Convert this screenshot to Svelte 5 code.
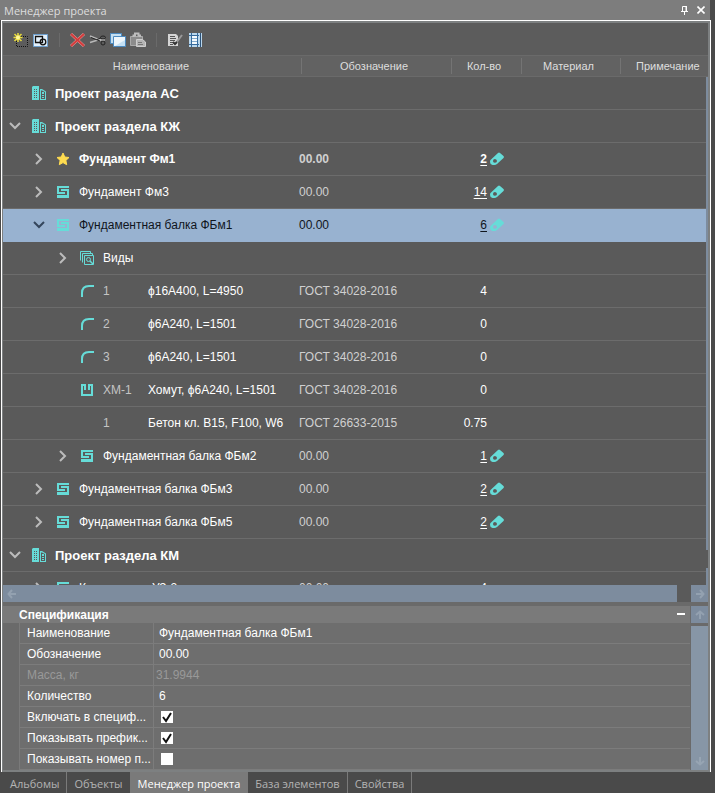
<script>
  const columns = ['Наименование', 'Обозначение', 'Кол-во', 'Материал', 'Примечание'];

  const rows = [
    { level: 0, icon: 'building', name: 'Проект раздела АС', section: true },
    { level: 0, icon: 'building', name: 'Проект раздела КЖ', section: true, open: true },
    { level: 1, icon: 'star', name: 'Фундамент Фм1', code: '00.00', qty: '2', link: true, bold: true, open: false },
    { level: 1, icon: 'beam', name: 'Фундамент Фм3', code: '00.00', qty: '14', link: true, open: false },
    { level: 1, icon: 'beam', name: 'Фундаментная балка ФБм1', code: '00.00', qty: '6', link: true, open: true, selected: true },
    { level: 2, icon: 'views', name: 'Виды', open: false },
    { level: 2, icon: 'bar', pos: '1', name: 'ϕ16A400, L=4950', code: 'ГОСТ 34028-2016', qty: '4' },
    { level: 2, icon: 'bar', pos: '2', name: 'ϕ6A240, L=1501', code: 'ГОСТ 34028-2016', qty: '0' },
    { level: 2, icon: 'bar', pos: '3', name: 'ϕ6A240, L=1501', code: 'ГОСТ 34028-2016', qty: '0' },
    { level: 2, icon: 'clamp', pos: 'ХМ-1', name: 'Хомут, ϕ6A240, L=1501', code: 'ГОСТ 34028-2016', qty: '0' },
    { level: 2, pos: '1', name: 'Бетон кл. B15, F100, W6', code: 'ГОСТ 26633-2015', qty: '0.75' },
    { level: 2, icon: 'beam', name: 'Фундаментная балка ФБм2', code: '00.00', qty: '1', link: true, open: false },
    { level: 1, icon: 'beam', name: 'Фундаментная балка ФБм3', code: '00.00', qty: '2', link: true, open: false },
    { level: 1, icon: 'beam', name: 'Фундаментная балка ФБм5', code: '00.00', qty: '2', link: true, open: false },
    { level: 0, icon: 'building', name: 'Проект раздела КМ', section: true, open: true },
    { level: 1, icon: 'beam', name: 'Конструкция УЗ-2', code: '00.00', qty: '4', open: false }
  ];

  let props = $state([
    { id: 'name', label: 'Наименование', value: 'Фундаментная балка ФБм1' },
    { id: 'code', label: 'Обозначение', value: '00.00' },
    { id: 'mass', label: 'Масса, кг', value: '31.9944', disabled: true },
    { id: 'count', label: 'Количество', value: '6' },
    { id: 'include', label: 'Включать в специф...', checked: true },
    { id: 'prefix', label: 'Показывать префик...', checked: true },
    { id: 'number', label: 'Показывать номер п...', checked: false }
  ]);

  const tabs = ['Альбомы', 'Объекты', 'Менеджер проекта', 'База элементов', 'Свойства'];
  let activeTab = $state('Менеджер проекта');
</script>

{#snippet rowIcon(name)}
  <svg class="row-icon" width="16" height="16" viewBox="0 0 16 16" aria-hidden="true">
    {#if name === 'building'}
      <path fill="#66dcd8" fill-rule="evenodd" d="M1 2 2 1H8V15H1ZM3 4V5H4V4ZM5 4V5H6V4ZM3 6V7H4V6ZM5 6V7H6V6ZM3 8V9H4V8ZM5 8V9H6V8ZM3 10V11H4V10ZM5 10V11H6V10ZM3 12V13H4V12ZM5 12V13H6V12Z" />
      <path fill="#66dcd8" fill-rule="evenodd" d="M9 4H11L15 6.500V15H9ZM10 5.500V14H14V7L11 5.500Z" />
      <path fill="#66dcd8" d="M11 7h2v2h-2zM11 10h2v1h-2zM11 12h2v1h-2z" />
    {:else if name === 'star'}
      <path fill="#ffdc50" stroke="#ffdc50" stroke-linejoin="round" d="m8 2 1.800 4 4.200.5-3.100 2.900.8 4.300L8 11.600l-3.700 2.100.8-4.300L2 6.500 6.200 6Z" />
    {:else if name === 'beam'}
      <path fill="#66dcd8" d="M2 2H14V4H4V8H10V10H2ZM6 5H14V12H2V11H12V7H6ZM2 12H14V14H2Z" />
    {:else if name === 'views'}
      <g fill="none" stroke="#66dcd8">
        <path d="M1.500 10.500V1.500H11.500V3.500M3.500 12.500V3.500H13.500V5.500M5.500 5.500H14.500V14.500H5.500Z" />
        <circle cx="9.500" cy="9.500" r="2" />
        <path stroke-width="1.500" d="m11 11 3 3" />
      </g>
    {:else if name === 'bar'}
      <path fill="none" stroke="#66dcd8" stroke-width="2" d="M3 14V10Q3 3 10 3H15" />
    {:else if name === 'clamp'}
      <path fill="none" stroke="#66dcd8" stroke-width="2" d="M6 8V3H3V13H13V3H10V8" />
    {/if}
  </svg>
{/snippet}

{#snippet arrow(dir)}
  <svg class="arrow {dir}" width="10" height="10" viewBox="0 0 10 10" aria-hidden="true">
    <path fill="none" stroke="#a3afbc" stroke-width="2" d="M9 5H2M5 1 1.500 5 5 9" />
  </svg>
{/snippet}

<div class="app">
  <header class="titlebar">
    <h1>Менеджер проекта</h1>
    <button type="button" aria-label="Закрепить">
      <svg width="9" height="10" viewBox="0 0 9 10"><path fill="none" stroke="#fff" d="M2.500 6V1.500H6V6M1 6.500H8M4.500 7V10" /><path stroke="#fff" d="M6.500 1V6" /></svg>
    </button>
    <button type="button" aria-label="Закрыть">
      <svg width="8" height="8" viewBox="0 0 8 8"><path stroke="#fff" stroke-width="1.600" d="m.5.5 7 7m0-7-7 7" /></svg>
    </button>
  </header>

  <main class="panel">
    <div class="toolbar" role="toolbar" aria-label="Инструменты">
      <button type="button" aria-label="Создать">
        <svg width="16" height="16" viewBox="0 0 16 16">
          <path fill="none" stroke="#111" stroke-dasharray="1 1" d="M3.500 9V14.500H14.500V4.500H8" />
          <path stroke="#e9dc3c" stroke-width="1.500" d="M5 1V10M.5 5.500H9.500M1.500 2 8.500 9M8.500 2 1.500 9" />
          <circle cx="5" cy="5.500" r="2" fill="#fff79a" />
        </svg>
      </button>
      <button type="button" aria-label="Создать из объектов">
        <svg width="16" height="16" viewBox="0 0 16 16">
          <path fill="#e4f1fb" stroke="#6ea0cf" d="M.5 2.500H14.500V14.500H.5Z" />
          <path fill="none" stroke="#111" stroke-width="1.300" d="M2.500 4.500H9.500V10.500H2.500Z" />
          <circle cx="10" cy="10" r="2.800" fill="none" stroke="#111" stroke-width="1.300" />
        </svg>
      </button>
      <span class="sep"></span>
      <button type="button" aria-label="Удалить">
        <svg width="16" height="16" viewBox="0 0 16 16">
          <path stroke="#e5a0a0" stroke-width="3" d="m1 2 13 12M14 2 1 14" />
          <path stroke="#d33c3c" stroke-width="2" d="m1 2 13 12M14 2 1 14" />
        </svg>
      </button>
      <button type="button" aria-label="Вырезать">
        <svg width="18" height="16" viewBox="0 0 18 16">
          <path fill="none" stroke="#b8b8b8" stroke-width="1.600" d="M1 4 12 8.500M1 10.500 12 7" />
          <path fill="none" stroke="#262626" d="M2 5.500 11 9M8 7.500 12 6" />
          <ellipse cx="14" cy="5.500" rx="2.500" ry="1.500" fill="none" stroke="#222" />
          <ellipse cx="14" cy="11" rx="2" ry="2" fill="none" stroke="#222" />
          <path stroke="#ccc" d="M12 8h4" />
        </svg>
      </button>
      <button type="button" aria-label="Копировать">
        <svg width="16" height="16" viewBox="0 0 16 16">
          <path fill="#c4dff2" stroke="#4c8ac0" d="M.5 1.500H11.500V11.500H.5Z" />
          <path fill="#edf6fc" stroke="#4c8ac0" d="M3.500 4.500H15.500V14.500H3.500Z" />
          <path fill="#c4e0f4" d="M5 14 15 8V14Z" />
        </svg>
      </button>
      <button type="button" aria-label="Вставить">
        <svg width="16" height="16" viewBox="0 0 16 16">
          <path fill="#8c8c8c" stroke="#aaa" d="M.5 4.500H12.500V13.500H.5Z" />
          <path fill="none" stroke="#bdbdbd" stroke-width="2" d="M3.500 5V3.500H5V1.500H8.500V3.500H10V5" />
          <path fill="#b4b4b4" stroke="#cecece" d="M6.500 7.500H12.500L15.500 10V14.500H6.500Z" />
          <path stroke="#777" d="M8 10.500h4M8 12.500h5" />
        </svg>
      </button>
      <span class="sep"></span>
      <button type="button" aria-label="Редактировать">
        <svg width="16" height="16" viewBox="0 0 16 16">
          <path fill="#d5d5d5" d="M1 2H9L11 4V14H1Z" />
          <path stroke="#555" d="M3 4.500h5M3 6.500h6M3 8.500h5M3 10.500h3M3 12.500h3" />
          <path stroke="#999" stroke-width="2" d="m9 11 6-8" />
          <path stroke="#333" stroke-width="2" d="m6 10 2 2 2-2" fill="none" />
        </svg>
      </button>
      <button type="button" aria-label="Столбцы">
        <svg width="16" height="16" viewBox="0 0 16 16">
          <path fill="#b9d6ec" d="M2 1H15V15H2Z" />
          <path fill="#f4f9fd" d="M5 4h5v8H5z" />
          <path stroke="#356a9c" d="M2 3.500H12M2 12.500H12M4.500 1V15M10.500 1V15" />
          <path stroke="#2c5278" d="M13.500 1V15" />
          <path stroke="#7fa9cb" d="M5 6.500H10M5 9.500H10" />
        </svg>
      </button>
    </div>

    <div class="tree">
      <table>
        <colgroup>
          <col />
          <col class="col-code" />
          <col class="col-qty" />
          <col class="col-material" />
          <col class="col-note" />
        </colgroup>
        <thead>
          <tr>
            {#each columns as column}
              <th scope="col">{column}</th>
            {/each}
          </tr>
        </thead>
        <tbody>
          {#each rows as row}
            <tr class:selected={row.selected} class:section={row.section} class:bold={row.bold}>
              <td>
                <div class="name level-{row.level}">
                  {#if row.open !== undefined}
                    <button type="button" class="toggle" class:open={row.open} aria-label="Развернуть" aria-expanded={row.open}>
                      <svg width="12" height="12" viewBox="0 0 12 12"><path fill="none" stroke="currentColor" stroke-width="2" d="m3 1 5 5-5 5" /></svg>
                    </button>
                  {:else}
                    <span class="toggle"></span>
                  {/if}
                  {@render rowIcon(row.icon)}
                  {#if row.pos}
                    <span class="pos">{row.pos}</span>
                  {/if}
                  <span>{row.name}</span>
                </div>
              </td>
              <td class="code">{row.code ?? ''}</td>
              <td>
                {#if row.qty}
                  <div class="qty">
                    {#if row.link}
                      <a href="#quantity">{row.qty}</a>
                      <svg width="14" height="14" viewBox="0 0 14 14" aria-hidden="true">
                        <path fill="#66dcd8" fill-rule="evenodd" d="M.5 8 8 1Q9 0 10 1L13.500 4Q14.300 5 13.500 6L7 12Q5.500 13.200 4 13H2.500Q0 12.500 0 10Q0 8.700.5 8ZM5 7Q3 7 3 9T5 10.800T7 9T5 7Z" />
                      </svg>
                    {:else}
                      <span>{row.qty}</span>
                    {/if}
                  </div>
                {/if}
              </td>
              <td></td>
              <td></td>
            </tr>
          {/each}
        </tbody>
      </table>
      <div class="tree-scroll"><i></i><b></b></div>
    </div>

    <div class="hscroll">
      <div class="thumb">{@render arrow('left')}</div>
      <div class="end">{@render arrow('right')}</div>
    </div>

    <section class="spec">
      <div class="spec-main">
        <div class="spec-head">
          <h2>Спецификация</h2>
          <button type="button" aria-label="Свернуть"></button>
        </div>
        <div class="props">
          {#each props as prop}
            <div class="prop" class:disabled={prop.disabled}>
              <label for={prop.id}>{prop.label}</label>
              {#if prop.checked !== undefined}
                <input id={prop.id} type="checkbox" bind:checked={prop.checked} />
              {:else}
                <input id={prop.id} type="text" bind:value={prop.value} disabled={prop.disabled} />
              {/if}
            </div>
          {/each}
        </div>
      </div>
      <div class="vscroll">
        <div class="end">{@render arrow('up')}</div>
        <div class="thumb">{@render arrow('down')}</div>
      </div>
    </section>
  </main>

  <nav class="tabs">
    {#each tabs as tab}
      <button type="button" class:active={tab === activeTab} onclick={() => (activeTab = tab)}>{tab}</button>
    {/each}
  </nav>
</div>

<style>
  :global(body) {
    margin: 0;
    background: #4a4a4a;
  }

  .app {
    display: flex;
    flex-direction: column;
    height: 100vh;
    font: 12px 'Liberation Sans', Arial, sans-serif;
    color: #fff;
  }

  button {
    padding: 0;
    border: 0;
    background: none;
    color: inherit;
    font: inherit;
  }

  svg {
    display: block;
    flex: none;
  }

  .titlebar {
    display: flex;
    align-items: center;
    gap: 8px;
    height: 20px;
    margin-right: 5px;
    padding: 0 5px 0 4px;
    background: #7d7d7d;
  }

  .titlebar h1 {
    flex: 1;
    margin: 0;
    color: #dedede;
    font: 11px 'Open Sans', sans-serif;
  }

  .panel {
    display: flex;
    flex: 1;
    flex-direction: column;
    min-height: 0;
    margin: 0 4px 0 1px;
    padding: 2px 2px 2px 1px;
    border: 1px solid #fff;
    border-bottom: 0;
    background: #7d8081;
  }

  .toolbar {
    display: flex;
    align-items: center;
    height: 32px;
    padding: 2px 8px 0;
    background: #5c5c5c;
    box-sizing: border-box;
  }

  .toolbar button {
    display: grid;
    place-items: center;
    width: 20px;
    height: 20px;
  }

  .sep {
    width: 1px;
    height: 14px;
    margin: 0 8px;
    background: #6a6a6a;
  }

  .tree {
    position: relative;
    flex: 1;
    min-height: 0;
    overflow: hidden;
    background: #5a5a5a;
  }

  table {
    width: 100%;
    table-layout: fixed;
    border-spacing: 0;
  }

  .col-code {
    width: 150px;
  }

  .col-qty {
    width: 70px;
  }

  .col-material {
    width: 99px;
  }

  .col-note {
    width: 90px;
  }

  th {
    height: 22px;
    padding: 0;
    border-top: 1px solid #6a6a6a;
    border-bottom: 1px solid #6a6a6a;
    background: #626262;
    box-sizing: border-box;
    color: #dedede;
    font-size: 11px;
    font-weight: normal;
  }

  th + th {
    background: linear-gradient(#747474, #747474) 2px 2px / 1px 16px no-repeat #626262;
  }

  th:last-child {
    padding-left: 18px;
    text-align: left;
  }

  td {
    height: 33px;
    padding: 0;
    border-bottom: 1px solid #6c6c6c;
    box-sizing: border-box;
    white-space: nowrap;
  }

  .name {
    display: flex;
    align-items: center;
  }

  .level-1 {
    padding-left: 24px;
  }

  .level-2 {
    padding-left: 48px;
  }

  .toggle {
    display: grid;
    place-items: center;
    width: 24px;
    height: 24px;
    color: #bcbcbc;
  }

  .toggle.open svg {
    transform: rotate(90deg);
  }

  .row-icon {
    margin: 0 8px 0 4px;
  }

  .pos {
    width: 45px;
    color: #c4c4c4;
  }

  .code {
    color: #d0d0d0;
  }

  .section {
    font-size: 13px;
    font-weight: bold;
  }

  .bold {
    font-weight: bold;
  }

  .selected td {
    border-color: #98b2d0;
    background: #98b2d0;
    color: #10151c;
  }

  .selected .toggle {
    color: #34465c;
  }

  .qty {
    display: grid;
    grid-template-columns: 38px 14px;
    align-items: center;
    gap: 3px;
    text-align: right;
  }

  .qty a {
    color: inherit;
    text-underline-offset: 2px;
  }

  .tree-scroll {
    position: absolute;
    top: 22px;
    right: 0;
    bottom: 0;
    display: flex;
    flex-direction: column;
    gap: 18px;
    width: 2px;
    background: #5a5a5a;
  }

  .tree-scroll i,
  .tree-scroll b {
    flex: 1;
    background: #7d8c9e;
  }

  .tree-scroll b {
    flex: 0 0 17px;
  }

  .hscroll {
    display: flex;
    height: 17px;
    background: #5a5a5a;
  }

  .thumb,
  .end {
    display: flex;
    align-items: center;
    background: #7d8c9e;
  }

  .end {
    justify-content: center;
    width: 17px;
    height: 17px;
  }

  .hscroll .thumb {
    flex: 1;
    margin-right: 14px;
    padding-left: 4px;
  }

  .arrow {
    opacity: 0.6;
  }

  .right {
    transform: rotate(180deg);
  }

  .up {
    transform: rotate(90deg);
  }

  .down {
    transform: rotate(-90deg);
  }

  .spec {
    display: flex;
    gap: 1px;
    padding-top: 4px;
    background: #6a6a6a;
  }

  .spec-main {
    flex: 1;
    min-width: 0;
  }

  .spec-head {
    display: flex;
    align-items: center;
    height: 17px;
    padding: 0 5px 0 16px;
    background: #7a7a7a;
  }

  .spec-head h2 {
    flex: 1;
    margin: 0;
    font-size: 12px;
  }

  .spec-head button {
    width: 8px;
    height: 2px;
    margin-bottom: 2px;
    background: #fff;
  }

  .props {
    margin-left: 16px;
    border-left: 1px solid #7a7a7a;
  }

  .prop {
    display: grid;
    grid-template-columns: 134px 1fr;
    align-items: center;
    height: 21px;
    border-bottom: 1px solid #7c7c7c;
    background: #6e6e6e;
    box-sizing: border-box;
  }

  .prop label {
    padding-left: 7px;
    border-right: 1px solid #7c7c7c;
    line-height: 20px;
    white-space: nowrap;
    overflow: hidden;
    box-sizing: border-box;
  }

  .prop input[type='text'] {
    width: 100%;
    height: 20px;
    padding: 0 5px;
    border: 0;
    background: none;
    box-sizing: border-box;
    color: inherit;
    font: inherit;
  }

  .prop.disabled {
    color: #999;
  }

  .prop.disabled input[type='text'] {
    padding: 0 2px;
  }

  .prop input[type='checkbox'] {
    width: 12px;
    height: 12px;
    margin: 0 7px;
    background: #fff;
    appearance: none;
  }

  .prop input:checked {
    background: #fff
      url("data:image/svg+xml,%3Csvg xmlns='http://www.w3.org/2000/svg' viewBox='0 0 12 12'%3E%3Cpath fill='none' stroke='%23111' stroke-width='2' d='M2 6l3 4 5-8'/%3E%3C/svg%3E");
  }

  .vscroll {
    display: flex;
    flex-direction: column;
    gap: 3px;
    width: 17px;
  }

  .vscroll .thumb {
    flex: 1;
    align-items: flex-end;
    justify-content: center;
    padding-bottom: 4px;
    background: #8796a6;
  }

  .tabs {
    display: flex;
    height: 21px;
    padding-left: 3px;
    background: #4a4a4a;
  }

  .tabs button {
    padding: 2px 7px 0;
    border-right: 1px solid #7a7a7a;
    color: #b4b4b4;
    font: 11px 'Open Sans', sans-serif;
    white-space: nowrap;
  }

  .tabs .active {
    background: #7a7a7a;
    color: #fff;
  }
</style>
